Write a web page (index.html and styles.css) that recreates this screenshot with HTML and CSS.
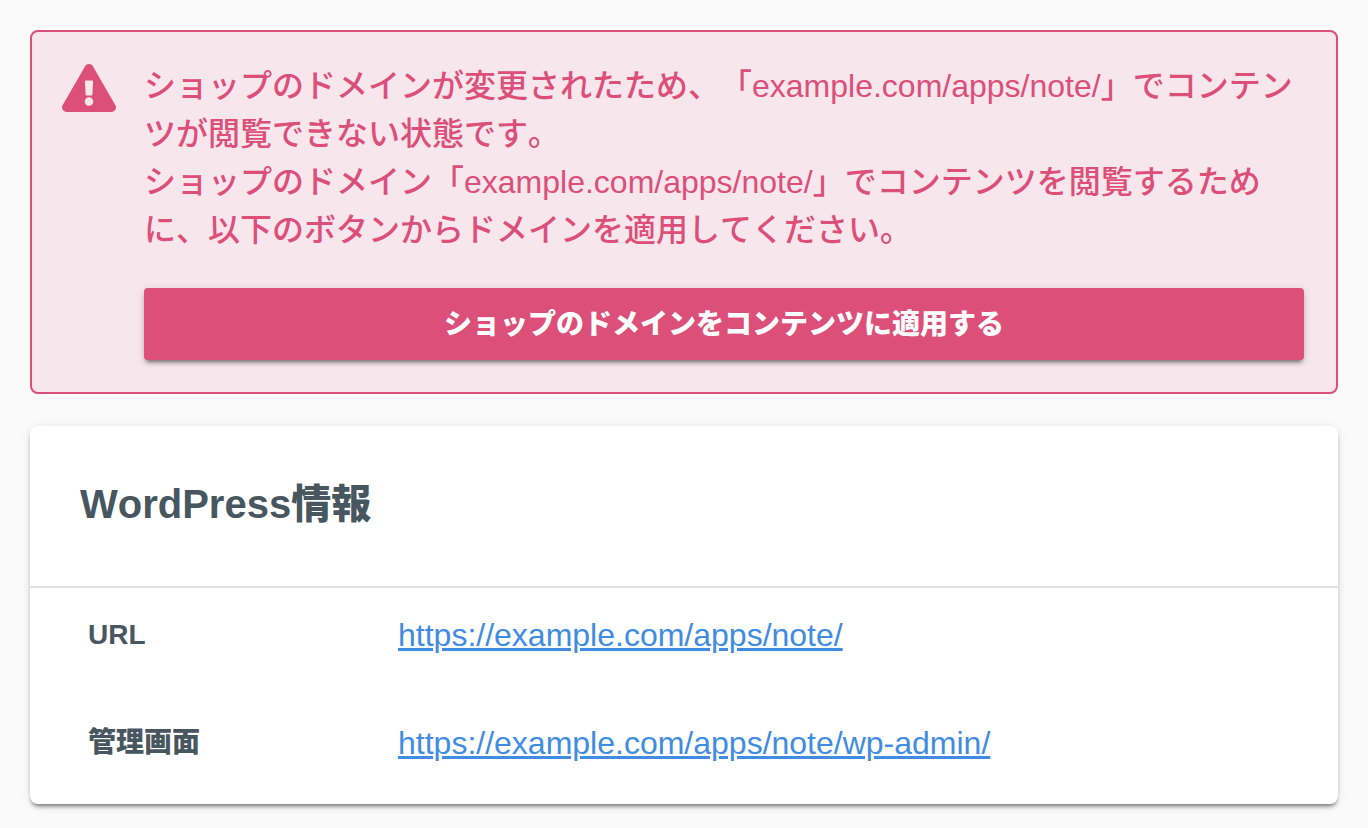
FILE: index.html
```html
<!DOCTYPE html>
<html lang="ja">
<head>
    <meta charset="UTF-8">
    <meta name="viewport" content="width=device-width, initial-scale=1.0">
    <title>WordPress情報</title>
    <link rel="stylesheet" href="styles.css">
</head>
<body>
    <section class="alert" role="alert">
        <svg class="alert-icon" viewBox="0 0 576 512" aria-hidden="true">
            <path fill="currentColor" d="M569.5 440C588 472 564.800 512 527.900 512H48.100C11.100 512-12 472 6.500 440L246.400 24C264.900-8 311.200-8 329.600 24L569.500 440zM288 354c-25.400 0-46 20.600-46 46s20.600 46 46 46 46-20.600 46-46-20.600-46-46-46zM244.300 188.700l7.500 136C252.100 331 257.400 336 263.700 336h48.600c6.300 0 11.600-5 11.900-11.300l7.500-136C332.100 181.800 326.600 176 319.700 176h-63.400c-6.900 0-12.400 5.800-12 12.700z"/>
        </svg>
        <div class="alert-body">
            <p class="alert-text">ショップのドメインが変更されたため、「example.com/apps/note/」でコンテンツが閲覧できない状態です。<br>ショップのドメイン「example.com/apps/note/」でコンテンツを閲覧するために、以下のボタンからドメインを適用してください。</p>
            <button type="button" class="apply-button">ショップのドメインをコンテンツに適用する</button>
        </div>
    </section>

    <section class="card">
        <h2 class="card-title">WordPress情報</h2>
        <table class="info">
            <tr>
                <th scope="row">URL</th>
                <td><a href="https://example.com/apps/note/">https://example.com/apps/note/</a></td>
            </tr>
            <tr>
                <th scope="row">管理画面</th>
                <td><a href="https://example.com/apps/note/wp-admin/">https://example.com/apps/note/wp-admin/</a></td>
            </tr>
        </table>
    </section>
</body>
</html>
```
FILE: styles.css
```css
* {
    box-sizing: border-box;
}
body {
    margin: 0;
    padding: 30px 30px 24px;
    background: #fafafa;
    color: #485660;
    font-family: "Liberation Sans", "Noto Sans CJK JP", sans-serif;
    font-kerning: none;
    text-spacing-trim: space-all;
}
.alert {
    display: flex;
    align-items: flex-start;
    gap: 28px;
    padding: 30px 32px 32px 30px;
    border: 2px solid #db4f79;
    border-radius: 8px;
    background: #f7e6ec;
    color: #db4f79;
}
.alert-icon {
    flex: none;
    width: 54px;
    height: 48px;
    margin-top: 2px;
}
.alert-body {
    flex: 1;
}
.alert-text {
    margin: 0 0 34px;
    font-size: 32px;
    font-weight: 500;
    line-height: 48px;
}
.apply-button {
    display: block;
    width: 100%;
    height: 72px;
    padding: 0 0 4px;
    border: none;
    border-radius: 4px;
    background: #db4f79;
    box-shadow: 0 2px 10px rgba(0, 0, 0, 0.12), 0 4px 4px -2px rgba(0, 0, 0, 0.5);
    color: #fff;
    font-family: inherit;
    font-size: 28px;
    font-weight: 900;
    cursor: pointer;
}
.card {
    margin-top: 32px;
    border-radius: 8px;
    background: #fff;
    box-shadow: 0 2px 10px rgba(0, 0, 0, 0.12), 0 4px 4px -2px rgba(0, 0, 0, 0.5);
}
.card-title {
    margin: 0;
    padding: 48px 50px 52px;
    border-bottom: 2px solid #e0e0e0;
    font-size: 40px;
    font-weight: 900;
    line-height: 60px;
}
.info {
    width: 100%;
    border-collapse: collapse;
}
.info th,
.info td {
    padding: 23px 0 37px;
    line-height: 48px;
    text-align: left;
    vertical-align: top;
}
.info th {
    width: 368px;
    padding-left: 58px;
    font-size: 28px;
    font-weight: 900;
}
.info td {
    font-size: 32px;
}
.info a {
    color: #3f8ce2;
}
```
